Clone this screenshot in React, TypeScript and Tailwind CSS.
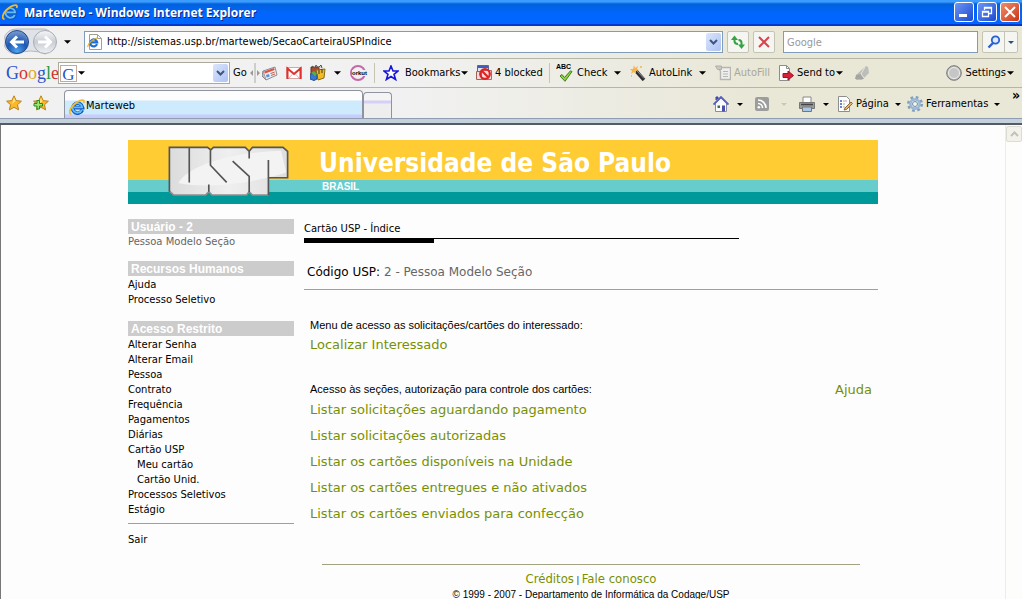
import { ReactNode } from 'react'

const sidebarLinks = [
    { label: 'Alterar Senha' },
    { label: 'Alterar Email' },
    { label: 'Pessoa' },
    { label: 'Contrato' },
    { label: 'Frequência' },
    { label: 'Pagamentos' },
    { label: 'Diárias' },
    { label: 'Cartão USP' },
    { label: 'Meu cartão', nested: true },
    { label: 'Cartão Unid.', nested: true },
    { label: 'Processos Seletivos' },
    { label: 'Estágio' },
]

const cardLinks = [
    'Listar solicitações aguardando pagamento',
    'Listar solicitações autorizadas',
    'Listar os cartões disponíveis na Unidade',
    'Listar os cartões entregues e não ativados',
    'Listar os cartões enviados para confecção',
]

/* ---------- icons ---------- */

const Caret = ({ small }: { small?: boolean }) => (
    <svg viewBox="0 0 8 4" className={small ? 'h-[3px] w-[6px] shrink-0' : 'h-1 w-[7px] shrink-0'} fill="currentColor">
        <path d="M0 0h8L4 4z" />
    </svg>
)

const IeIcon = () => (
    <svg viewBox="0 0 16 16" className="size-4 shrink-0" fill="none">
        <path d="M13.300 11A5 5 0 1 1 13.600 8.600H5" stroke="#1458b8" strokeWidth="3.600" />
        <path d="M12.800 11A4.800 4.800 0 1 1 13.200 8.400H5" stroke="#62bdf7" strokeWidth="1.800" />
        <path d="M2.500 15C-1.500 15 1.500 7 8 3C12 .6 16.500 0 14.500 4" stroke="#f2bb2e" strokeWidth="1.800" />
    </svg>
)

const PageIeIcon = () => (
    <svg viewBox="0 0 16 16" className="size-4 shrink-0" fill="none">
        <path d="M2.500 .5h8l4 4v11h-12z" fill="#fff" stroke="#a4a08e" />
        <path d="M10.500 .5v4h4" stroke="#a4a08e" />
        <path d="M10 10.200A3.500 3.500 0 1 1 10.200 8.400H4" stroke="#1f6fd0" strokeWidth="2.200" />
        <path d="M1 13C0 11 5 5 10 4" stroke="#e9ae1d" strokeWidth="1.200" />
    </svg>
)

const NavArrows = () => (
    <svg viewBox="0 0 54 28" className="h-7 w-[54px]" fill="none">
        <defs>
            <radialGradient id="backFill" cx=".5" cy=".9" r=".9">
                <stop offset="0" stopColor="#4fa5ee" />
                <stop offset=".5" stopColor="#1c58b4" />
                <stop offset="1" stopColor="#7f9fd0" />
            </radialGradient>
            <linearGradient id="forwardFill" x1="0" y1="0" x2="0" y2="1">
                <stop offset="0" stopColor="#f6f7f9" />
                <stop offset=".5" stopColor="#c9cdd3" />
                <stop offset="1" stopColor="#f0f1f3" />
            </linearGradient>
        </defs>
        <path d="M12 1H41A13 13 0 0 1 41 26Q27 20 12 26A12 12 0 0 1 12 1Z" fill="#dfe2e7" stroke="#b4b8bf" />
        <circle cx="13" cy="14" r="11.500" fill="url(#backFill)" stroke="#23488a" />
        <circle cx="41" cy="14" r="11.500" fill="url(#forwardFill)" stroke="#a9adb4" />
        <path d="M20 14H8M13 8.500L7.500 14L13 19.500" stroke="#fff" strokeWidth="3" />
        <path d="M34 14H46M41 8.500L46.500 14L41 19.500" stroke="#fff" strokeWidth="3" />
    </svg>
)

const StarIcon = ({ plus }: { plus?: boolean }) => (
    <svg viewBox="0 0 16 16" className="size-4">
        <path d="M8 .8l2.200 4.800 5.200.6-3.900 3.500 1.100 5.200L8 12.300l-4.600 2.600 1.100-5.200L.6 6.200l5.200-.6z" fill="#fbb829" stroke="#b9821c" />
        <path d="M8 2.500l1.500 3.600L6 9z" fill="#ffe48a" />
        {plus && <path d="M4 5.500h2.500v3h3v2.500h-3v3H4v-3H1V8.500h3z" fill="#9be87a" stroke="#1c8f1c" />}
    </svg>
)

const NewsIcon = () => (
    <svg viewBox="0 0 16 16" className="size-4">
        <path d="M1 6l12-4 2 8-11 5z" fill="#e9e9ef" stroke="#8d8d9b" />
        <path d="M2 6.500l10-3.500.6 2L3 8.500z" fill="#e0523c" />
        <path d="M4 10l3-1 .7 2.500-3 1z" fill="#5a8fd8" />
        <path d="M8.500 8.500l4-1.300M9 10.500l4-1.500" stroke="#c86040" />
        <path d="M1 6l-1 5 4 4" fill="#bbb" stroke="#888" />
    </svg>
)

const MailIcon = () => (
    <svg viewBox="0 0 16 16" className="size-4" fill="none">
        <path d="M.5 2.500h15v11H.5z" fill="#fff" stroke="#d9a5a5" />
        <path d="M1.500 14V3.500L8 9l6.500-5.500V14" stroke="#e0312e" strokeWidth="2" />
        <path d="M3 13l3.500-4M13 13L9.500 9" stroke="#dcb4b4" />
    </svg>
)

const PicasaIcon = () => (
    <svg viewBox="0 0 16 16" className="size-4">
        <path d="M1 2h8v7H1z" fill="#ad4a2c" stroke="#5c2f22" />
        <path d="M2 1l3 2 1-3 2 3 3-3 1 3" stroke="#555" fill="#c9c9c9" />
        <path d="M6 5l9-1-1 9-6 2z" fill="#f0bb25" stroke="#8a6a12" />
        <path d="M0 9h7v5l-3 1.500L0 14z" fill="#3978cf" stroke="#244e8d" />
        <path d="M1 8l3-2 3 3-2 2z" fill="#5aae45" />
        <path d="M9 5v4M12 4v4" stroke="#333" />
    </svg>
)

const OrkutIcon = () => (
    <span className="grid size-4 place-items-center rounded-full border-2 border-[#c667a8] font-['Liberation_Sans'] text-[6px] leading-none font-bold">
        <span className="bg-[#efefef]">orkut</span>
    </span>
)

const OutlineStarIcon = () => (
    <svg viewBox="0 0 16 16" className="size-4">
        <path d="M8 1l2 5h5l-4 3.300 1.600 5.200L8 11.500l-4.600 3L5 9.300 1 6h5z" fill="#fff" stroke="#1616dc" strokeWidth="1.600" />
    </svg>
)

const BlockedIcon = () => (
    <svg viewBox="0 0 16 16" className="size-4" fill="none">
        <path d="M1.500 .5h11v10h-11z" fill="#dfe4f4" stroke="#5b6688" />
        <path d="M2 2h10" stroke="#3c5fbd" strokeWidth="2" />
        <path d="M.5 6.500h7v8h-7z" fill="#f3d7d5" stroke="#a06060" />
        <path d="M5.500 5.500h10v9h-10z" fill="#f8dcdc" stroke="#c06060" />
        <circle cx="9" cy="9" r="4.800" stroke="#dd2323" strokeWidth="2.200" />
        <path d="M5.500 5.500l7 7" stroke="#dd2323" strokeWidth="2.200" />
    </svg>
)

const CheckIcon = () => (
    <span className="flex w-[18px] flex-col items-start">
        <span className="font-['Liberation_Sans'] text-[7px] leading-[6px] font-bold">ABC</span>
        <svg viewBox="0 0 14 12" className="ml-[3px] h-3 w-[14px]">
            <path d="M1 6l2-1.500 2.500 3L11.500 .8l1.500.8L6 11.300z" fill="#8bd63e" stroke="#43791d" />
        </svg>
    </span>
)

const WandIcon = () => (
    <svg viewBox="0 0 16 16" className="size-4">
        <path d="M6 6l8 9" stroke="#2d2d33" strokeWidth="3.500" />
        <path d="M7 6l7 7.500" stroke="#8e8e96" />
        <path d="M4 0l1 3 3-2-1 3 2 1-3 1 0 3-2-2-3 2 1-3-2-2 3 0z" fill="#f4b64a" />
        <path d="M10 2h2M1 11h1" stroke="#f4b64a" strokeWidth="1.500" />
    </svg>
)

const FormIcon = () => (
    <svg viewBox="0 0 16 16" className="size-4" fill="none">
        <path d="M3.500 2.500h12v12h-10v-8z" fill="#eee" stroke="#b6b6b0" strokeWidth="1.400" />
        <path d="M.5 1h6v3.500h-4z" fill="#c9c9c4" stroke="#b0b0aa" />
        <path d="M8 6.500h5M8 9h5M8 11.500h5" stroke="#b6b6b0" />
    </svg>
)

const SendIcon = () => (
    <svg viewBox="0 0 16 16" className="size-4">
        <path d="M1.500 .5h7l3 3v12h-10z" fill="#fff" stroke="#8d8d8d" />
        <path d="M8.500 .5v3h3" fill="none" stroke="#8d8d8d" />
        <path d="M5 8.500h5V6l5.500 4.500L10 15v-2.500H5z" fill="#d5213a" stroke="#9a1226" />
    </svg>
)

const PenIcon = () => (
    <svg viewBox="0 0 16 16" className="size-4">
        <path d="M2 10L12 1l2 1 1 6-7 7H2z" fill="#bdbdb9" />
        <path d="M2 10l5-1 3 5H1z" fill="#a5a5a1" />
        <path d="M11 2L7 9l3 4" stroke="#e6e6e2" fill="none" />
    </svg>
)

const BallIcon = () => (
    <svg viewBox="0 0 16 16" className="size-4">
        <circle cx="8" cy="8" r="7.300" fill="#b9b9b9" stroke="#777" />
        <circle cx="8" cy="8" r="5.500" fill="#c6c6c6" stroke="#eee" />
    </svg>
)

const RefreshIcon = () => (
    <svg viewBox="0 0 16 16" className="size-4" fill="none">
        <path d="M4.500 4v3q0 3 3.500 3" stroke="#36a343" strokeWidth="2" />
        <path d="M1 6l3.500-4.500L8 6z" fill="#36a343" />
        <path d="M11.500 12V9q0-3-3-3" stroke="#36a343" strokeWidth="2" />
        <path d="M8 10.500l3.500 4.500 3.500-4.500z" fill="#36a343" />
    </svg>
)

const CloseIcon = ({ color }: { color: string }) => (
    <svg viewBox="0 0 12 12" className="size-3">
        <path d="M1 1l10 10M11 1L1 11" stroke={color} strokeWidth="2" />
    </svg>
)

const MagnifierIcon = () => (
    <svg viewBox="0 0 14 14" className="size-[14px]" fill="none">
        <circle cx="8.500" cy="5" r="3.700" stroke="#2a5fd0" strokeWidth="1.800" fill="#dcebff" />
        <path d="M6 8l-4.500 4.500" stroke="#2a5fd0" strokeWidth="2.400" />
    </svg>
)

const HomeIcon = () => (
    <svg viewBox="0 0 16 16" className="size-4">
        <path d="M2.500 7v8.500h11V7L8 2z" fill="#fbfbff" stroke="#8a8aa2" />
        <path d="M3 4V1h2v2" fill="#4b56b8" stroke="#3a439c" />
        <path d="M.5 8.500L8 1l7.500 7.500" fill="none" stroke="#5560c0" strokeWidth="1.800" />
        <path d="M9 9.500h3v6H9z" fill="#4850a8" />
        <path d="M4.500 9.500h2.500v2.500H4.500z" fill="#3d6b52" />
    </svg>
)

const FeedIcon = () => (
    <svg viewBox="0 0 14 14" className="size-[14px]" fill="none">
        <rect width="14" height="14" rx="2" fill="#9d9d9d" />
        <circle cx="3.800" cy="10.200" r="1.300" fill="#fff" />
        <path d="M3 6.500a4.500 4.500 0 0 1 4.500 4.500M3 3a8 8 0 0 1 8 8" stroke="#fff" strokeWidth="1.600" />
    </svg>
)

const PrinterIcon = () => (
    <svg viewBox="0 0 16 16" className="size-4">
        <path d="M4 1h8v6H4z" fill="#fff" stroke="#888" />
        <path d="M.5 6.500h15v6H.5z" fill="#9b9b9b" stroke="#777" />
        <path d="M2 8.500h12" stroke="#444" strokeWidth="1.500" />
        <path d="M3.500 11h9v4.500h-9z" fill="#a9c8e8" stroke="#777" />
    </svg>
)

const PageIcon = () => (
    <svg viewBox="0 0 16 16" className="size-4">
        <path d="M1.500 .5h8l3 3v12h-11z" fill="#fff" stroke="#8d8d8d" />
        <path d="M3 5h2M3 8h2M3 11h2" stroke="#3c62bd" strokeWidth="1.500" />
        <path d="M6 5h4M6 8h2M6 11h2" stroke="#aaa" />
        <path d="M8 12l6-6 1.500 1.500-6 6L7 14z" fill="#e2b36b" stroke="#8b6a3b" />
    </svg>
)

const GearIcon = () => (
    <svg viewBox="0 0 16 16" className="size-4" fill="none">
        <circle cx="8" cy="8" r="6.500" stroke="#7f9fc0" strokeWidth="3" strokeDasharray="2.550 2.550" />
        <circle cx="8" cy="8" r="4.600" fill="#f3f3ec" stroke="#9db8d2" strokeWidth="2.600" />
        <circle cx="8" cy="8" r="2.500" fill="#f3f3ec" stroke="#6e8fae" />
    </svg>
)

const UspLogo = () => (
    <svg viewBox="0 0 363 151" className="h-[50px] w-[121px] shrink-0" fill="none" strokeWidth="5">
        <defs>
            <linearGradient id="uspFill" x1="0" y1="0" x2="1" y2="0">
                <stop offset="0" stopColor="#dcdcdc" />
                <stop offset=".5" stopColor="#efefef" />
                <stop offset="1" stopColor="#dedede" />
            </linearGradient>
        </defs>
        <path
            d="M3 4H118L128 12L136 4H232L244 16L254 4H346L360 16V96H302V148H254L244 138L236 148H132L122 138L112 148H16L3 136Z"
            fill="url(#uspFill)"
        />
        <path d="M30 112C60 60 180 20 340 14L356 80C220 122 90 126 30 112Z" fill="#f3f3f3" />
        <path
            d="M302 148H254L244 138L236 148H132L122 138L112 148H16L3 136"
            stroke="#8f8f8f"
        />
        <path
            d="M3 138V4H118L128 12L136 4H232L244 16L254 4H346L360 16V96H302M302 42V148M63 4V110M127 10V58L176 110M122 138V116M244 14V38M194 46L244 92V140"
            stroke="#555"
        />
    </svg>
)

/* ---------- browser chrome ---------- */

const ToolButton = ({ width, icon, label, caret, disabled }: { width: string, icon: ReactNode, label: string, caret?: 'near' | 'far', disabled?: boolean }) => (
    <button disabled={disabled} className={`flex h-5 shrink-0 items-center gap-[3px] whitespace-nowrap disabled:text-[#a9a799] ${width}`}>
        {icon}
        <span className={caret === 'far' ? 'pr-1' : caret ? '-mr-[2px]' : ''}>{label}</span>
        {caret && <Caret />}
    </button>
)

const Separator = () => <div className="h-5 w-px shrink-0 bg-[#c6c4b3]" />

const DropArrow = ({ label }: { label: string }) => (
    <button aria-label={label} className="grid h-[18px] w-[15px] shrink-0 place-items-center rounded-xs bg-linear-to-br from-[#dbe5fc] to-[#adc2f4]">
        <svg viewBox="0 0 9 6" className="h-[6px] w-[9px]" fill="none" stroke="#3f567c" strokeWidth="2">
            <path d="M1 1l3.500 3.500L8 1" />
        </svg>
    </button>
)

const TitleBar = () => (
    <header className="flex h-[26px] items-center gap-[6px] border-b-2 border-[#0038cc] bg-linear-to-b from-[#3c9bff] from-8% via-[#0262dc] via-16% to-[#0166ff] to-60% px-[2px]">
        <IeIcon />
        <h1 className="flex-1 pt-px font-['Open_Sans','Noto_Sans',sans-serif] text-[12px] font-bold text-white [text-shadow:1px_1px_#0a2a80]">Marteweb - Windows Internet Explorer</h1>
        <div className="flex gap-[3px]">
            <button aria-label="Minimizar" className="flex size-5 items-end rounded-[3px] border border-white bg-linear-to-br from-[#6d94f5] to-[#1c48cf] p-1">
                <span className="h-[3px] w-2 bg-white" />
            </button>
            <button aria-label="Restaurar" className="grid size-5 place-items-center rounded-[3px] border border-white bg-linear-to-br from-[#6d94f5] to-[#1c48cf]">
                <svg viewBox="0 0 12 12" className="size-3" fill="none" stroke="#fff">
                    <path d="M3.500 4V1.500h7v6H8M3.500 2h7M1.500 5.500h6v5h-6zM1.500 6h6" strokeWidth="1.300" />
                </svg>
            </button>
            <button aria-label="Fechar" className="grid size-5 place-items-center rounded-[3px] border border-white bg-linear-to-br from-[#f08a68] to-[#c9330d]">
                <CloseIcon color="#fff" />
            </button>
        </div>
    </header>
)

const AddressBar = () => (
    <div className="flex h-[33px] items-center border-b border-[#b7b5a5] pr-1 pl-[4px]">
        <button aria-label="Voltar e avançar" className="shrink-0"><NavArrows /></button>
        <button aria-label="Páginas recentes" className="grid w-[18px] shrink-0 place-items-center"><Caret /></button>
        <div className="ml-2 flex h-[22px] min-w-0 flex-1 items-center gap-1 border border-[#7f9db9] bg-white pr-px pl-[2px]">
            <PageIeIcon />
            <input aria-label="Endereço" defaultValue="http://sistemas.usp.br/marteweb/SecaoCarteiraUSPIndice" className="min-w-0 flex-1 outline-none" />
            <DropArrow label="Mostrar endereços" />
        </div>
        <div className="ml-1 flex shrink-0 gap-1">
            <button aria-label="Atualizar" className="grid size-[22px] place-items-center rounded-xs border border-[#c5c3b6] bg-[#f5f5f2]"><RefreshIcon /></button>
            <button aria-label="Parar" className="grid size-[22px] place-items-center rounded-xs border border-[#c5c3b6] bg-[#f5f5f2]"><CloseIcon color="#d9424b" /></button>
        </div>
        <input aria-label="Pesquisar" placeholder="Google" className="ml-2 h-[22px] w-[195px] shrink-0 border border-[#7f9db9] bg-white px-[3px] outline-none placeholder:text-[#999]" />
        <div className="ml-1 flex h-[22px] shrink-0 rounded-xs border border-[#c5c3b6] bg-[#f5f5f2]">
            <button aria-label="Buscar" className="grid w-[21px] place-items-center"><MagnifierIcon /></button>
            <button aria-label="Opções de busca" className="grid w-[13px] place-items-center border-l border-[#c5c3b6] text-[#2c4f86]"><Caret small /></button>
        </div>
    </div>
)

const GoogleBar = () => (
    <div className="flex h-[29px] items-center border-b border-[#b7b5a5] pr-2 pl-[6px]">
        <div className="w-[52px] shrink-0 font-['Liberation_Serif',serif] text-[18px] leading-5">
            <span className="text-[#2a53c8]">G</span>
            <span className="text-[#d5302c]">o</span>
            <span className="text-[#dfa818]">o</span>
            <span className="text-[#2a53c8]">g</span>
            <span className="text-[#2f9a3d]">l</span>
            <span className="text-[#d5302c]">e</span>
        </div>
        <div className="flex h-[22px] w-[172px] shrink-0 items-center border border-[#aba999] bg-white px-px">
            <button aria-label="Tipo de busca" className="flex items-center gap-px">
                <span className="grid size-[17px] place-items-center border border-[#c5a99d] font-['Liberation_Serif',serif] text-[17px] leading-none text-[#2a53c8]">G</span>
                <Caret />
            </button>
            <input aria-label="Busca Google" className="min-w-0 flex-1 outline-none" />
            <DropArrow label="Buscas anteriores" />
        </div>
        <button className="w-5 shrink-0 pl-[3px] text-left">Go</button>
        <div className="w-3 shrink-0 text-[#9a9a94]">
            <svg viewBox="0 0 10 20" className="h-5 w-[10px]" fill="currentColor"><path d="M3 7v6L0 10zM7 7v6l3-3zM4.600 0h.8v20h-.8z" /></svg>
        </div>
        <button aria-label="Notícias" className="w-6 shrink-0"><NewsIcon /></button>
        <button aria-label="Gmail" className="w-6 shrink-0"><MailIcon /></button>
        <button aria-label="Picasa" className="flex w-10 shrink-0 items-center gap-2"><PicasaIcon /><Caret /></button>
        <button aria-label="Orkut" className="w-6 shrink-0"><OrkutIcon /></button>
        <Separator />
        <div className="flex pr-[6px] pl-2">
            <ToolButton width="w-[93px]" icon={<span className="pr-[3px]"><OutlineStarIcon /></span>} label="Bookmarks" caret="near" />
            <ToolButton width="w-[67px]" icon={<BlockedIcon />} label="4 blocked" />
        </div>
        <Separator />
        <div className="flex pl-[6px]">
            <ToolButton width="w-[74px]" icon={<CheckIcon />} label="Check" caret="far" />
            <ToolButton width="w-[85px]" icon={<WandIcon />} label="AutoLink" caret="far" />
            <ToolButton width="w-[63px]" icon={<FormIcon />} label="AutoFill" disabled />
            <ToolButton width="w-[76px]" icon={<SendIcon />} label="Send to" caret="near" />
            <button aria-label="Realçar" disabled><PenIcon /></button>
        </div>
        <div className="ml-auto">
            <ToolButton width="w-auto" icon={<BallIcon />} label="Settings" caret="near" />
        </div>
    </div>
)

const TabBar = () => (
    <div className="flex h-[31px] items-end border-b border-[#8f9db3]">
        <div className="flex h-full w-[64px] shrink-0 items-center gap-[11px] pl-[6px]">
            <button aria-label="Favoritos"><StarIcon /></button>
            <button aria-label="Adicionar a favoritos"><StarIcon plus /></button>
        </div>
        <button className="flex h-7 w-[299px] items-center gap-px rounded-t-sm border border-b-0 border-[#8f93a0] bg-[linear-gradient(#fdfdfd_0_9px,#cdebfc_10px_23px,#c9ccfb_24px)] pt-1 pl-1">
            <IeIcon />
            <span>Marteweb</span>
        </button>
        <button aria-label="Nova guia" className="h-[26px] w-[29px] rounded-t-sm border border-b-0 border-[#8f93a0] bg-[linear-gradient(#f4f4f4_0_7px,#d6d0f6_8px_10px,#eeeeee_11px)]" />
        <div className="ml-auto flex h-full items-center pt-[2px]">
            <button aria-label="Página inicial" className="flex w-[42px] items-center gap-2"><HomeIcon /><Caret small /></button>
            <button aria-label="Feeds" disabled className="flex w-[44px] items-center gap-3 text-[#c9c7ba]"><FeedIcon /><Caret small /></button>
            <button aria-label="Imprimir" className="flex w-[38px] items-center gap-2"><PrinterIcon /><Caret small /></button>
            <button className="flex w-[70px] items-center gap-[3px]"><PageIcon />Página<span className="pl-[3px]"><Caret small /></span></button>
            <button className="flex w-[103px] items-center gap-[3px]"><GearIcon />Ferramentas<span className="pl-[3px]"><Caret small /></span></button>
            <button aria-label="Mais" className="w-3 self-start text-[14px] leading-[10px] font-bold">»</button>
        </div>
    </div>
)

/* ---------- page ---------- */

const SideTitle = ({ children }: { children: ReactNode }) => (
    <h2 className="h-[15px] bg-[#ccc] pl-[3px] font-['Liberation_Sans',sans-serif] text-[12px] leading-4 font-bold text-white">{children}</h2>
)

const Sidebar = () => (
    <nav className="w-[166px] shrink-0 text-[10px] leading-[15px]">
        <SideTitle>Usuário - 2</SideTitle>
        <p className="mb-3 text-[#666]">Pessoa Modelo Seção</p>
        <SideTitle>Recursos Humanos</SideTitle>
        <ul className="mt-px mb-[14px]">
            <li><a href="#">Ajuda</a></li>
            <li><a href="#">Processo Seletivo</a></li>
        </ul>
        <SideTitle>Acesso Restrito</SideTitle>
        <ul className="mt-px border-b border-[#a3a283] pb-[6px]">
            {sidebarLinks.map(l => (
                <li key={l.label} className={l.nested ? 'pl-[9px]' : ''}><a href="#">{l.label}</a></li>
            ))}
        </ul>
        <p className="mt-2"><a href="#">Sair</a></p>
    </nav>
)

const Banner = () => (
    <div className="flex h-16 bg-[linear-gradient(#ffcc33_0_40px,#66cccc_40px_52px,#009999_52px)] pt-[6px] pl-10">
        <UspLogo />
        <div className="pl-[30px] text-white">
            <p className="font-['DejaVu_Sans_Condensed','Noto_Sans',sans-serif] text-[26px] leading-[34px] font-bold">Universidade de São Paulo</p>
            <p className="pl-[3px] font-['Liberation_Sans',sans-serif] text-[10px] leading-[14px] font-bold">BRASIL</p>
        </div>
    </div>
)

const Main = () => (
    <main className="min-w-0 flex-1">
        <h2 className="pt-[2px] text-[10px] leading-[15px]">Cartão USP - Índice</h2>
        <div className="mt-[2px] w-[435px] max-w-full border-t border-black">
            <div className="h-1 w-[130px] bg-black" />
        </div>
        <p className="mt-5 border-b border-[#a3a283] pb-[8px] pl-[3px] text-[12px] leading-[18px]">
            Código USP: <span className="text-[#666]">2 - Pessoa Modelo Seção</span>
        </p>
        <section className="mt-[26px] pl-[6px] text-[13px] leading-[18px] text-[#789000]">
            <p className="mb-[2px] font-['Liberation_Sans',sans-serif] text-[11px] text-black">Menu de acesso as solicitações/cartões do interessado:</p>
            <a href="#">Localizar Interessado</a>
        </section>
        <section className="mt-[26px] flex justify-between px-[6px] text-[13px] leading-[18px] text-[#789000]">
            <div>
                <p className="mb-[2px] font-['Liberation_Sans',sans-serif] text-[11px] text-black">Acesso às seções, autorização para controle dos cartões:</p>
                <ul className="flex flex-col gap-2 pt-px">
                    {cardLinks.map(c => (
                        <li key={c}><a href="#">{c}</a></li>
                    ))}
                </ul>
            </div>
            <a href="#" className="pt-px">Ajuda</a>
        </section>
        <footer className="mx-[18px] mt-[41px] border-t border-[#a3a283] pt-[5px] text-center">
            <p className="font-['DejaVu_Sans_Condensed',sans-serif] text-[13px] leading-[18px] text-[#789000]">
                <a href="#">Créditos</a>
                <span className="text-[9px] text-black"> | </span>
                <a href="#">Fale conosco</a>
            </p>
            <p className="font-['Liberation_Sans',sans-serif] text-[10px] leading-[11px]">© 1999 - 2007 - Departamento de Informática da Codage/USP</p>
        </footer>
    </main>
)

export default function App() {
    return (
        <div className="flex h-screen flex-col overflow-hidden bg-[#fdfdfd] text-black">
            <div className="shrink-0 bg-linear-to-r from-[#f1f1f1] from-40% to-[#e9e7d6] to-75% font-['DejaVu_Sans_Condensed','Noto_Sans',sans-serif] text-[11px]">
                <TitleBar />
                <AddressBar />
                <GoogleBar />
                <TabBar />
                <div className="h-[6px] border-b-2 border-[#555b62] bg-[#c4d0dc]" />
            </div>
            <div className="flex min-h-0 flex-1 border-l border-[#777]">
                <div className="min-w-0 flex-1 overflow-hidden font-['DejaVu_Sans',sans-serif]">
                    <div className="mx-auto w-full max-w-[750px] pt-[15px]">
                        <Banner />
                        <div className="flex gap-[10px] pt-[15px]">
                            <Sidebar />
                            <Main />
                        </div>
                    </div>
                </div>
                <div className="w-[17px] shrink-0 border-l border-[#eeede5] bg-[#fdfdfb] pt-px">
                    <button aria-label="Rolar para cima" disabled className="grid h-4 w-4 place-items-center rounded-xs border border-[#dddcd2] bg-[#f2f1ea]">
                        <svg viewBox="0 0 9 6" className="h-[6px] w-[9px]" fill="none" stroke="#c3c2b8" strokeWidth="2"><path d="M1 5l3.500-3.500L8 5" /></svg>
                    </button>
                </div>
            </div>
        </div>
    )
}
